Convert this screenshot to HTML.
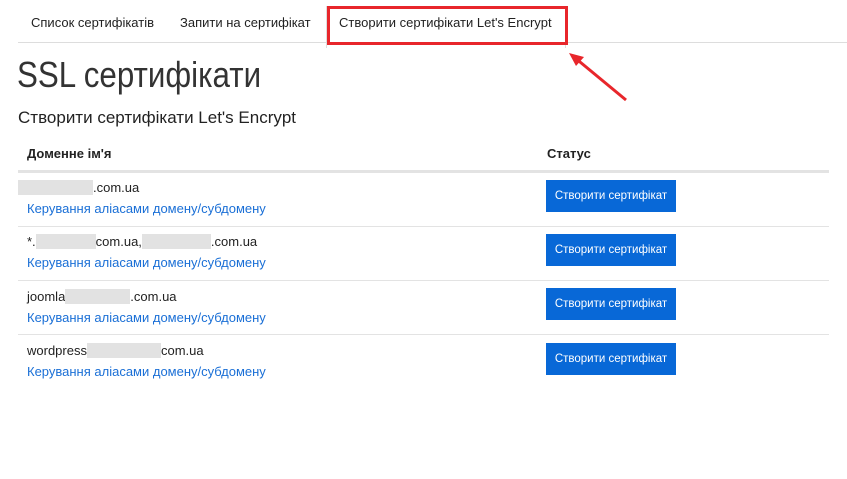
<!DOCTYPE html>
<html><head><meta charset="utf-8"><style>
body{margin:0;width:847px;height:479px;background:#fff;font-family:"Liberation Sans",sans-serif;color:#222;position:relative;overflow:hidden}
.a{position:absolute;white-space:nowrap}
.tab{font-size:13px;top:15px}
.btn{position:absolute;left:546px;width:130px;height:32px;background:#0868d7;color:#fff;font-size:11.5px;line-height:32px;text-align:center}
.d{font-size:13px;left:18px}
.l{font-size:13px;left:27px;color:#1a6fd6}
.bl{display:inline-block;background:#e2e2e2;height:15px;vertical-align:-3px}
.sep{position:absolute;left:18px;width:811px;height:1px;background:#e3e3e3}
</style></head><body>
<div class="a tab" style="left:31px">Список сертифікатів</div>
<div class="a tab" style="left:180px">Запити на сертифікат</div>
<div class="a" style="left:326px;top:6px;width:240px;height:42px;border:1px solid #ddd;border-bottom:none;box-sizing:border-box"></div>
<div class="a tab" style="left:339px">Створити сертифікати Let's Encrypt</div>
<div class="a" style="left:18px;top:42px;width:309px;height:1px;background:#ddd"></div>
<div class="a" style="left:566px;top:42px;width:281px;height:1px;background:#ddd"></div>
<div class="a" style="left:327px;top:6px;width:241px;height:39px;border:3px solid #e8262b;box-sizing:border-box"></div>
<svg class="a" style="left:560px;top:45px" width="80" height="60"><line x1="66" y1="55" x2="14" y2="12" stroke="#e8262b" stroke-width="3"/><polygon points="9,8 24,12 16,21" fill="#e8262b"/></svg>
<div class="a" style="left:17px;top:54px;font-size:36px;color:#333;transform:scaleX(0.87);transform-origin:0 0">SSL сертифікати</div>
<div class="a" style="left:18px;top:108px;font-size:17px;color:#222">Створити сертифікати Let's Encrypt</div>
<div class="a" style="left:27px;top:146px;font-size:13px;font-weight:bold">Доменне ім'я</div>
<div class="a" style="left:547px;top:146px;font-size:13px;font-weight:bold">Статус</div>
<div class="a" style="left:18px;top:170px;width:811px;height:3px;background:#e3e3e3"></div>

<div class="a d" style="top:180px;left:18px"><span class="bl" style="width:75px"></span>.com.ua</div>
<div class="a l" style="top:201px">Керування аліасами домену/субдомену</div>
<div class="btn" style="top:180px">Створити сертифікат</div>
<div class="sep" style="top:226px"></div>

<div class="a d" style="top:234px;left:27px">*.<span class="bl" style="width:60px"></span>com.ua,<span class="bl" style="width:69px"></span>.com.ua</div>
<div class="a l" style="top:255px">Керування аліасами домену/субдомену</div>
<div class="btn" style="top:234px">Створити сертифікат</div>
<div class="sep" style="top:280px"></div>

<div class="a d" style="top:289px;left:27px">joomla<span class="bl" style="width:65px"></span>.com.ua</div>
<div class="a l" style="top:310px">Керування аліасами домену/субдомену</div>
<div class="btn" style="top:288px">Створити сертифікат</div>
<div class="sep" style="top:334px"></div>

<div class="a d" style="top:343px;left:27px">wordpress<span class="bl" style="width:74px"></span>com.ua</div>
<div class="a l" style="top:364px">Керування аліасами домену/субдомену</div>
<div class="btn" style="top:343px">Створити сертифікат</div>
</body></html>
